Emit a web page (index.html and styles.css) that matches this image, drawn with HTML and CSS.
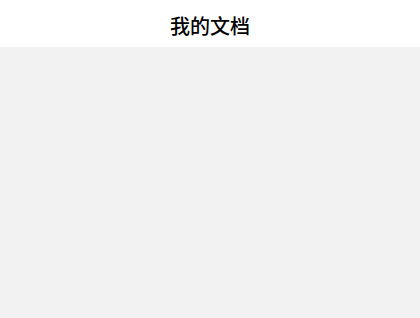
FILE: index.html
```html
<!DOCTYPE html>
<html lang="zh">
<head>
<meta charset="utf-8">
<link rel="stylesheet" href="styles.css">
</head>
<body>
<header class="nav-bar"><h1 class="nav-title">我的文档</h1></header>
<main class="content"></main>
</body>
</html>
```
FILE: styles.css
```css
html, body { margin: 0; padding: 0; height: 100%; }
body {
  background: #f2f2f2;
  font-family: "Noto Sans CJK SC", "Noto Sans", sans-serif;
  display: flex;
  flex-direction: column;
}
.nav-bar {
  height: 47px;
  flex-shrink: 0;
  background: #ffffff;
  display: flex;
  align-items: center;
  justify-content: center;
  padding-top: 4px;
  box-sizing: border-box;
}
.nav-title {
  margin: 0;
  font-size: 20px;
  font-weight: 500;
  color: #000000;
  line-height: 1;
}
.content { flex: 1; }
```
